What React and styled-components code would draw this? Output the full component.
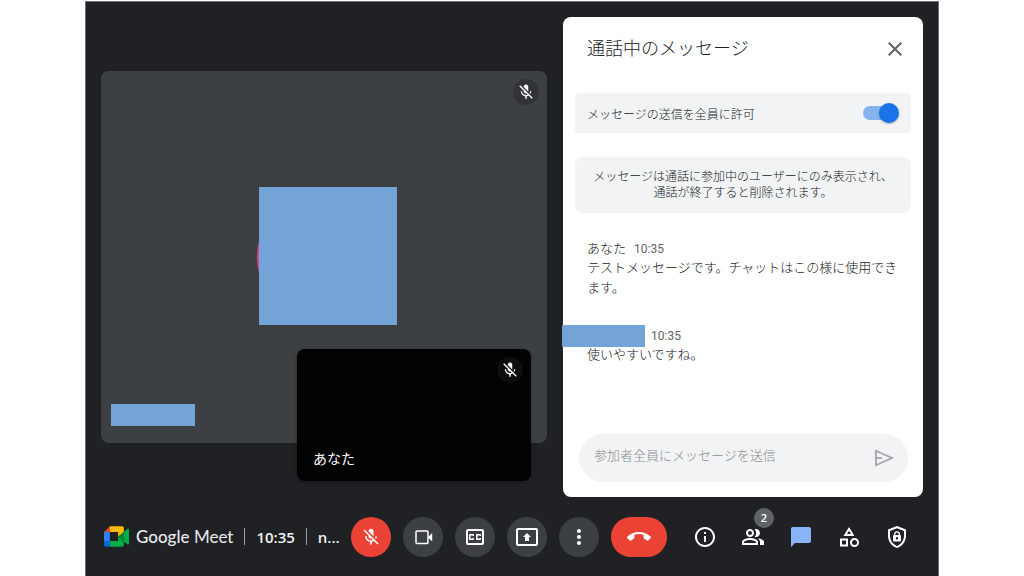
import React, { useState } from 'react';
import styled, { createGlobalStyle } from 'styled-components';
import {
  MdCallEnd,
  MdChatBubble,
  MdClose,
  MdMicOff,
  MdMoreVert,
  MdOutlineCategory,
  MdOutlineClosedCaption,
  MdOutlineInfo,
  MdOutlinePeopleAlt,
  MdOutlinePresentToAll,
} from 'react-icons/md';

const colors = {
  bg: '#202124',
  edge: '#6e7174',
  tile: '#3c4043',
  red: '#ea4335',
  blue: '#1a73e8',
  lightBlue: '#8ab4f8',
  redact: '#73a3d7',
  pink: '#d8457f',
  text: '#202124',
  textMuted: '#5f6368',
  placeholder: '#8b8e91',
  surface: '#f1f3f4',
  white: '#ffffff',
};

const messages = [
  {
    id: 1,
    author: 'あなた',
    time: '10:35',
    text: 'テストメッセージです。チャットはこの様に使用できます。',
  },
  { id: 2, author: '', time: '10:35', text: '使いやすいですね。' },
];

function MeetLogo() {
  return (
    <svg width="25" height="21" viewBox="0 0 87.5 72" aria-hidden="true">
      <path fill="#00832d" d="M49.5 36l8.53 9.75 11.47 7.33 2-17.02-2-16.64-11.69 6.44z" />
      <path fill="#0066da" d="M0 51.5V66c0 3.315 2.685 6 6 6h14.5l3-10.96-3-9.54-9.95-3z" />
      <path fill="#e94235" d="M20.5 0L0 20.5l10.55 3 9.95-3 2.95-9.41z" />
      <path fill="#2684fc" d="M20.5 20.5H0v31h20.5z" />
      <path
        fill="#00ac47"
        d="M82.6 8.68L69.5 19.42v33.66l13.16 10.79c1.97 1.54 4.85.135 4.85-2.37V11c0-2.535-2.945-3.925-4.91-2.32zM49.5 36v15.5h-29V72h43c3.315 0 6-2.685 6-6V53.08z"
      />
      <path fill="#ffba00" d="M63.5 0h-43v20.5h29V36l20-16.57V6c0-3.315-2.685-6-6-6z" />
    </svg>
  );
}

function CameraIcon() {
  return (
    <svg width="24" height="24" viewBox="0 0 24 24" fill="none">
      <rect x="5" y="6" width="12" height="12.400" rx="1" stroke="currentColor" strokeWidth="1.500" />
      <path fill="currentColor" d="M17 12.200l4.200-4.200v8.400z" />
    </svg>
  );
}

function SendIcon() {
  return (
    <svg width="24" height="24" viewBox="0 0 24 24" fill="none" stroke="currentColor" strokeWidth="1.800">
      <path d="M3.900 4.800v14.400L20 12z" />
      <path d="M4 12h6" />
    </svg>
  );
}

function ShieldLockIcon() {
  return (
    <svg width="24" height="24" viewBox="0 0 24 24" fill="currentColor">
      <path
        fillRule="evenodd"
        d="M12 1L3 4.6v6.2c0 5.6 3.8 10.8 9 12.2 5.200-1.400 9-6.600 9-12.200V4.600zm0 2.150l7 2.800v4.850c0 4.500-2.950 8.800-7 10.100-4.050-1.300-7-5.600-7-10.100V5.950z"
      />
      <path
        fillRule="evenodd"
        d="M9 10V9.200a3 3 0 0 1 6 0V10h.2c.5 0 .8.400.8.800v4.900c0 .500-.400.800-.800.800H8.800c-.500 0-.800-.400-.800-.800v-4.900c0-.500.400-.800.800-.800zm1.300 0h3.400V9.200a1.700 1.700 0 0 0-3.400 0zm1.700 2.100a1.200 1.200 0 1 0 0 2.400 1.200 1.200 0 0 0 0-2.400z"
      />
    </svg>
  );
}

export default function App() {
  const [allowAll, setAllowAll] = useState(true);
  const [draft, setDraft] = useState('');

  return (
    <>
      <GlobalStyle />
      <Page>
        <Window>
          <Main>
            <Stage>
              <Tile>
                <Avatar>
                  <AvatarCover />
                </Avatar>
                <MutedBadge>
                  <MdMicOff size={18} />
                </MutedBadge>
                <TileNameCover />
              </Tile>
              <SelfTile>
                <MutedBadge>
                  <MdMicOff size={18} />
                </MutedBadge>
                <TileName>あなた</TileName>
              </SelfTile>
            </Stage>

            <Panel>
              <PanelHeader>
                <PanelTitle>通話中のメッセージ</PanelTitle>
                <CloseButton type="button" aria-label="閉じる">
                  <MdClose size={24} />
                </CloseButton>
              </PanelHeader>
              <AllowRow htmlFor="allow-all">
                メッセージの送信を全員に許可
                <Switch
                  id="allow-all"
                  type="checkbox"
                  checked={allowAll}
                  onChange={(e) => setAllowAll(e.target.checked)}
                />
              </AllowRow>
              <Notice>
                メッセージは通話に参加中のユーザーにのみ表示され、
                <br />
                通話が終了すると削除されます。
              </Notice>
              <MessageList>
                {messages.map(({ id, author, time, text }) => (
                  <li key={id}>
                    <MessageMeta>
                      {author ? <span>{author}</span> : <HiddenAuthor />}
                      <Time>{time}</Time>
                    </MessageMeta>
                    <MessageText>{text}</MessageText>
                  </li>
                ))}
              </MessageList>
              <Composer onSubmit={(e) => e.preventDefault()}>
                <ComposerInput
                  type="text"
                  aria-label="参加者全員にメッセージを送信"
                  placeholder="参加者全員にメッセージを送信"
                  value={draft}
                  onChange={(e) => setDraft(e.target.value)}
                />
                <SendButton type="submit" aria-label="送信">
                  <SendIcon />
                </SendButton>
              </Composer>
            </Panel>
          </Main>

          <BottomBar>
            <MeetingInfo>
              <MeetLogo />
              <Brand>
                <b>Google</b> Meet
              </Brand>
              <Divider />
              <InfoText>10:35</InfoText>
              <Divider />
              <InfoText>n...</InfoText>
            </MeetingInfo>
            <Controls>
              <ControlButton type="button" aria-label="マイク" $bg={colors.red}>
                <MdMicOff size={20} />
              </ControlButton>
              <ControlButton type="button" aria-label="カメラ">
                <CameraIcon />
              </ControlButton>
              <ControlButton type="button" aria-label="字幕">
                <MdOutlineClosedCaption size={24} />
              </ControlButton>
              <ControlButton type="button" aria-label="画面共有">
                <MdOutlinePresentToAll size={24} />
              </ControlButton>
              <ControlButton type="button" aria-label="その他">
                <MdMoreVert size={24} />
              </ControlButton>
              <ControlButton type="button" aria-label="通話から退出" $bg={colors.red} $wide>
                <MdCallEnd size={24} />
              </ControlButton>
            </Controls>
            <SideButtons>
              <SideButton type="button" aria-label="詳細">
                <MdOutlineInfo size={24} />
              </SideButton>
              <SideButton type="button" aria-label="参加者">
                <MdOutlinePeopleAlt size={24} />
                <CountBadge>2</CountBadge>
              </SideButton>
              <SideButton type="button" aria-label="チャット" $active>
                <MdChatBubble size={24} />
              </SideButton>
              <SideButton type="button" aria-label="アクティビティ">
                <MdOutlineCategory size={24} />
              </SideButton>
              <SideButton type="button" aria-label="主催者用ボタン">
                <ShieldLockIcon />
              </SideButton>
            </SideButtons>
          </BottomBar>
        </Window>
      </Page>
    </>
  );
}

const GlobalStyle = createGlobalStyle`
  * {
    box-sizing: border-box;
  }

  body {
    margin: 0;
    background: ${colors.white};
    font-family: Roboto, 'Noto Sans CJK JP', sans-serif;
  }

  button {
    display: flex;
    align-items: center;
    justify-content: center;
    padding: 0;
    border: 0;
    background: none;
    cursor: pointer;
  }
`;

const Page = styled.div`
  display: flex;
  min-height: 100vh;
  padding: 1px 85px 0;
`;

const Window = styled.div`
  flex: 1;
  min-width: 0;
  display: flex;
  flex-direction: column;
  border: 1px solid ${colors.edge};
  border-bottom: 0;
  background: ${colors.bg};
`;

const Main = styled.main`
  flex: 1;
  display: grid;
  grid-template-columns: minmax(0, 1fr) 360px;
  gap: 16px;
  padding: 15px 15px 0;
`;

const Stage = styled.section`
  position: relative;
  display: grid;
  align-content: center;
`;

const Tile = styled.div`
  position: relative;
  display: flex;
  align-items: center;
  justify-content: center;
  aspect-ratio: 6 / 5;
  border-radius: 8px;
  background: ${colors.tile};
`;

const Avatar = styled.div`
  position: relative;
  width: 134px;
  height: 134px;
  border-radius: 50%;
  background: ${colors.pink};
`;

const AvatarCover = styled.div`
  position: absolute;
  top: -3px;
  left: 2px;
  width: 138px;
  height: 138px;
  background: ${colors.redact};
`;

const TileNameCover = styled.div`
  position: absolute;
  left: 10px;
  bottom: 17px;
  width: 84px;
  height: 22px;
  background: ${colors.redact};
`;

const MutedBadge = styled.span`
  position: absolute;
  top: 8px;
  right: 8px;
  display: flex;
  align-items: center;
  justify-content: center;
  width: 26px;
  height: 26px;
  border-radius: 50%;
  background: rgba(32, 33, 36, 0.4);
  color: ${colors.white};
`;

const SelfTile = styled.div`
  position: absolute;
  right: 16px;
  bottom: 16px;
  display: flex;
  align-items: flex-end;
  width: 234px;
  height: 132px;
  padding: 12px 16px;
  border-radius: 8px;
  background: #020203;
  box-shadow: 0 1px 4px rgba(0, 0, 0, 0.3);
`;

const TileName = styled.span`
  font-size: 14px;
  line-height: 20px;
  color: ${colors.white};
`;

const Panel = styled.aside`
  display: flex;
  flex-direction: column;
  padding: 12px 12px 15px;
  border-radius: 8px;
  background: ${colors.white};
  color: ${colors.text};
`;

const PanelHeader = styled.header`
  display: flex;
  align-items: center;
  justify-content: space-between;
  height: 40px;
  margin-bottom: 24px;
  padding-left: 12px;
`;

const PanelTitle = styled.h1`
  margin: 0;
  font-size: 18px;
  font-weight: 300;
  line-height: 24px;
`;

const CloseButton = styled.button`
  width: 32px;
  height: 32px;
  color: ${colors.textMuted};
`;

const AllowRow = styled.label`
  display: flex;
  align-items: center;
  justify-content: space-between;
  height: 40px;
  margin-bottom: 24px;
  padding: 0 12px;
  border-radius: 4px;
  background: ${colors.surface};
  font-size: 12px;
  font-weight: 300;
`;

const Switch = styled.input`
  appearance: none;
  position: relative;
  width: 36px;
  height: 20px;
  margin: 0;
  cursor: pointer;

  &::before {
    content: '';
    position: absolute;
    inset: 3px 2px 3px 0;
    border-radius: 7px;
    background: ${colors.textMuted};
    opacity: 0.5;
  }

  &::after {
    content: '';
    position: absolute;
    top: 0;
    left: 0;
    width: 20px;
    height: 20px;
    border-radius: 50%;
    background: ${colors.white};
    box-shadow: 0 1px 2px rgba(0, 0, 0, 0.3);
  }

  &:checked::before {
    background: ${colors.blue};
  }

  &:checked::after {
    left: 16px;
    background: ${colors.blue};
  }
`;

const Notice = styled.p`
  margin: 0 0 26px;
  padding: 12px 8px;
  border-radius: 8px;
  background: ${colors.surface};
  font-size: 12px;
  font-weight: 300;
  line-height: 16px;
  text-align: center;
`;

const MessageList = styled.ul`
  flex: 1;
  display: flex;
  flex-direction: column;
  gap: 28px;
  margin: 0;
  padding: 0 8px 0 12px;
  list-style: none;
  font-size: 13px;
  font-weight: 300;
  line-height: 20px;
`;

const MessageMeta = styled.div`
  display: flex;
  align-items: center;
  gap: 8px;
  height: 19px;
`;

const HiddenAuthor = styled.span`
  position: relative;
  width: 56px;
  height: 19px;

  &::after {
    content: '';
    position: absolute;
    top: -1px;
    left: -25px;
    width: 83px;
    height: 22px;
    background: ${colors.redact};
  }
`;

const Time = styled.time`
  font-size: 12px;
  font-weight: 400;
  color: ${colors.textMuted};
`;

const MessageText = styled.p`
  margin: 0;
`;

const Composer = styled.form`
  display: flex;
  align-items: center;
  height: 48px;
  margin: 0 3px 0 4px;
  padding: 0 12px 0 15px;
  border-radius: 24px;
  background: ${colors.surface};
`;

const ComposerInput = styled.input`
  flex: 1;
  min-width: 0;
  height: 48px;
  padding: 0 0 6px;
  border: 0;
  outline: 0;
  background: none;
  font-family: inherit;
  font-size: 13px;
  font-weight: 300;
  color: ${colors.text};

  &::placeholder {
    color: ${colors.placeholder};
  }
`;

const SendButton = styled.button`
  width: 24px;
  height: 24px;
  color: #a3a6a9;
`;

const BottomBar = styled.footer`
  display: flex;
  align-items: center;
  height: 79px;
  padding: 0 17px 0 18px;
  color: ${colors.white};
`;

const MeetingInfo = styled.div`
  flex: 1;
  min-width: 0;
  display: flex;
  align-items: center;
  overflow: hidden;
  white-space: nowrap;
`;

const Brand = styled.span`
  margin-left: 7px;
  font-family: Lato, sans-serif;
  font-size: 17px;
  font-weight: 400;
  color: #e8eaed;

  b {
    font-weight: 500;
  }
`;

const Divider = styled.span`
  width: 1px;
  height: 17px;
  margin: 0 11px;
  background: #9aa0a6;
`;

const InfoText = styled.span`
  font-family: 'Open Sans', sans-serif;
  font-size: 15px;
  font-weight: 600;
  color: #f1f3f4;
`;

const Controls = styled.div`
  display: flex;
  gap: 12px;
`;

const ControlButton = styled.button`
  width: ${({ $wide }) => ($wide ? 56 : 40)}px;
  height: 40px;
  border-radius: 20px;
  background: ${({ $bg }) => $bg || colors.tile};
  color: ${colors.white};
`;

const SideButtons = styled.div`
  display: flex;
  margin-left: 14px;
`;

const SideButton = styled.button`
  position: relative;
  width: 48px;
  height: 48px;
  color: ${({ $active }) => ($active ? colors.lightBlue : colors.white)};
`;

const CountBadge = styled.span`
  position: absolute;
  top: -5px;
  right: 3px;
  width: 20px;
  height: 20px;
  border-radius: 50%;
  background: ${colors.textMuted};
  font-family: 'Open Sans', sans-serif;
  font-size: 11px;
  font-weight: 600;
  line-height: 20px;
  color: ${colors.white};
`;
